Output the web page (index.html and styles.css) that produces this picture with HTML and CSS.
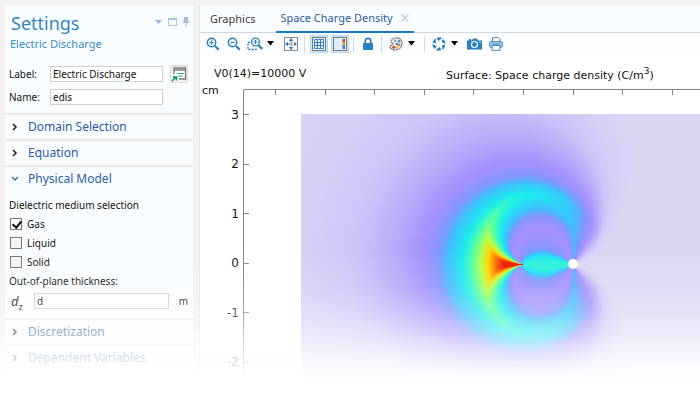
FILE: index.html
```html
<!DOCTYPE html>
<html lang="en">
<head>
<meta charset="utf-8">
<title>Electric Discharge</title>
<link rel="stylesheet" href="styles.css">
</head>
<body>
<div class="app">
  <aside class="settings">
    <header class="settings-head">
      <h1>Settings</h1>
      <div class="window-tools">
        <button aria-label="Panel menu"><svg width="8" height="8" viewBox="0 0 8 8"><path d="M0 2h7L3.500 6z" fill="#8fb6da"/></svg></button>
        <button aria-label="Maximize"><svg width="9" height="8" viewBox="0 0 9 8"><path d="M.5 .5h8v7h-8z" fill="none" stroke="#a3c4e2"/><path d="M0 1h9" stroke="#a3c4e2" stroke-width="2"/></svg></button>
        <button aria-label="Pin"><svg width="8" height="10" viewBox="0 0 8 10"><path d="M2 0h4v4l1 1v1H1V5l1-1zM3.500 6h1v4h-1z" fill="#9dbfe0"/></svg></button>
      </div>
    </header>
    <p class="subtitle">Electric Discharge</p>
    <div class="field-row">
      <label for="label">Label:</label>
      <input id="label" type="text" value="Electric Discharge">
      <button class="goto" aria-label="Go to source">
        <svg width="16" height="16" viewBox="0 0 16 16"><path d="M3 8V2h11.500v11H8" fill="#fff" stroke="#777" stroke-width="1.300"/><path d="M3 4h11" stroke="#777" stroke-width="1.500"/><path d="M6 7.500h7M7 10h5" stroke="#35b27c" stroke-width="1.200"/><path d="M1 15l4-4M2 11h3.500v3.500" fill="none" stroke="#149a5b" stroke-width="1.500"/></svg>
      </button>
    </div>
    <div class="field-row">
      <label for="name">Name:</label>
      <input id="name" type="text" value="edis">
    </div>

    <button class="section first"><svg width="6" height="8" viewBox="0 0 6 8"><path d="M1 1l3 3-3 3" fill="none" stroke="#222" stroke-width="1.500"/></svg>Domain Selection</button>
    <button class="section"><svg width="6" height="8" viewBox="0 0 6 8"><path d="M1 1l3 3-3 3" fill="none" stroke="#222" stroke-width="1.500"/></svg>Equation</button>
    <button class="section" aria-expanded="true"><svg width="8" height="6" viewBox="0 0 8 6"><path d="M1 1l3 3 3-3" fill="none" stroke="#2f66a8" stroke-width="1.300"/></svg>Physical Model</button>
    <div class="model">
      <p>Dielectric medium selection</p>
      <label class="check"><input type="checkbox" checked>Gas</label>
      <label class="check"><input type="checkbox">Liquid</label>
      <label class="check"><input type="checkbox">Solid</label>
      <p class="caption"><label for="dz">Out-of-plane thickness:</label></p>
      <div class="thickness"><span class="symbol"><i>d</i><sub>z</sub></span><input id="dz" type="text" value="d"><span class="unit">m</span></div>
    </div>
    <button class="section"><svg width="6" height="8" viewBox="0 0 6 8"><path d="M1 1l3 3-3 3" fill="none" stroke="#222" stroke-width="1.500"/></svg>Discretization</button>
    <button class="section"><svg width="6" height="8" viewBox="0 0 6 8"><path d="M1 1l3 3-3 3" fill="none" stroke="#222" stroke-width="1.500"/></svg>Dependent Variables</button>
  </aside>

  <main class="graphics">
    <nav class="tabs">
      <button class="tab">Graphics</button>
      <button class="tab active">Space Charge Density <svg width="8" height="8" viewBox="0 0 8 8"><path d="M0.500 0.500l7 7M7.500 0.500l-7 7" stroke="#bcc8d4" stroke-width="1.200"/></svg></button>
    </nav>
    <div class="toolbar">
      <div class="group">
        <button aria-label="Zoom in"><svg width="14" height="14" viewBox="0 0 14 14" fill="none" stroke="#2b80c0"><circle cx="5.500" cy="5.500" r="4.200" stroke-width="1.400"/><path d="M3.300 5.500h4.400M5.500 3.300v4.400" stroke-width="1.200"/><path d="M9 9l3.700 3.700" stroke-width="2.200"/></svg></button>
        <button aria-label="Zoom out"><svg width="14" height="14" viewBox="0 0 14 14" fill="none" stroke="#2b80c0"><circle cx="5.500" cy="5.500" r="4.200" stroke-width="1.400"/><path d="M3.300 5.500h4.400" stroke-width="1.200"/><path d="M9 9l3.700 3.700" stroke-width="2.200"/></svg></button>
        <button aria-label="Zoom box"><svg width="16" height="14" viewBox="0 0 16 14" fill="none" stroke="#2b80c0"><path d="M3 5.500H1v7h8v-2" stroke-dasharray="2 1.200" stroke-width="1.300"/><circle cx="8.500" cy="5" r="3.900" fill="#fff" stroke-width="1.400"/><path d="M6.500 5h4M8.500 3v4" stroke-width="1.200"/><path d="M11.500 8.200l3.700 3.800" stroke-width="2.200"/></svg></button>
        <button class="caret" aria-label="Zoom options"><svg width="7" height="5" viewBox="0 0 7 5"><path d="M0 0h7L3.500 4.500z"/></svg></button>
        <button class="apart" aria-label="Zoom extents"><svg width="14" height="14" viewBox="0 0 14 14"><rect x=".5" y=".5" width="13" height="13" fill="#f8fbff" stroke="#888"/><path d="M7 1l2.300 3H4.700zM7 13l2.300-3H4.700zM1 7l3-2.300v4.600zM13 7l-3-2.300v4.600z" fill="#2b80c0"/><path d="M7 4v6M4 7h6" stroke="#777" stroke-dasharray="2 1"/></svg></button>
      </div>
      <div class="group toggles">
        <button class="on" aria-label="Show grid"><svg width="14" height="14" viewBox="0 0 14 14"><rect x=".5" y=".5" width="13" height="13" fill="#e8f3fd" stroke="#777"/><path d="M2.500 2.500h9v9h-9zM5.500 2.500v9M8.500 2.500v9M2.500 5.500h9M2.500 8.500h9" fill="none" stroke="#3480c8"/></svg></button>
        <button class="on" aria-label="Show legends"><svg width="14" height="14" viewBox="0 0 14 14"><rect x=".5" y=".5" width="13" height="13" fill="#dcedfb" stroke="#777"/><path d="M9.500 2H12v3.500H9.500z" fill="#d9482b"/><path d="M9.500 5H12v3H9.500z" fill="#f0a52a"/><path d="M9.500 8H12v4H9.500z" fill="#3a7fc8"/></svg></button>
      </div>
      <div class="group">
        <button aria-label="Lock view"><svg width="12" height="14" viewBox="0 0 12 14"><path d="M3.200 7V4.200a2.800 2.800 0 0 1 5.600 0V7" fill="none" stroke="#2b80c0" stroke-width="1.700"/><rect x="1" y="6" width="10" height="7" rx=".5" fill="#2b80c0"/></svg></button>
      </div>
      <div class="group palette">
        <button aria-label="Color theme"><svg width="14" height="14" viewBox="0 0 14 14"><path d="M6.500 1c3.800-.8 6.700 1.700 6.500 5.500-.2 3.800-2.700 6.500-6.300 6.500C3 13 .8 11.200 1 9.500c.3-1.700 3-1 3-2.800C4 5.500 1.800 6 2 4.300 2.200 2.500 4.300 1.300 6.500 1z" fill="#f3f1ee" stroke="#858585" stroke-width="1.200"/><circle cx="6" cy="3.700" r="1.300" fill="#999"/><circle cx="10" cy="4.300" r="1.300" fill="#3e86c4"/><circle cx="7.800" cy="7" r="1.200" fill="#3e86c4"/><circle cx="10.200" cy="8" r="1.400" fill="#e9792f"/><circle cx="4.800" cy="10.300" r="1.500" fill="#d94630"/><circle cx="8" cy="10.500" r="1.200" fill="#edb33c"/></svg></button>
        <button class="caret" aria-label="Theme options"><svg width="7" height="5" viewBox="0 0 7 5"><path d="M0 0h7L3.500 4.500z"/></svg></button>
      </div>
      <div class="group">
        <button aria-label="Refresh plot"><svg width="14" height="14" viewBox="0 0 14 14" fill="#2b80c0"><path id="blade" d="M4.700 1Q7.500 -.3 10.300 1.100L6.200 3.900z"/><use href="#blade" transform="rotate(60 7 7)"/><use href="#blade" transform="rotate(120 7 7)"/><use href="#blade" transform="rotate(180 7 7)"/><use href="#blade" transform="rotate(240 7 7)"/><use href="#blade" transform="rotate(300 7 7)"/></svg></button>
        <button class="caret" aria-label="Refresh options"><svg width="7" height="5" viewBox="0 0 7 5"><path d="M0 0h7L3.500 4.500z"/></svg></button>
        <button class="apart" aria-label="Snapshot"><svg width="15" height="12" viewBox="0 0 15 12"><path d="M1 2.500h1V1h2v1.500h1L6 .5h4l1 2h4V11.500H0v-9z" fill="#2b80c0"/><circle cx="7.500" cy="6.500" r="3" fill="#2b80c0" stroke="#fff" stroke-width="1.200"/><circle cx="13" cy="4.300" r=".7" fill="#fff"/></svg></button>
        <button aria-label="Print"><svg width="14" height="14" viewBox="0 0 14 14"><path d="M3.500 5V.700h6l1.500 1.500V5" fill="#fff" stroke="#3f87c2"/><rect x=".7" y="4.700" width="12.600" height="5.600" rx="1.300" fill="#b9d7ee" stroke="#3f87c2"/><path d="M3 8.500h8v4.800H3z" fill="#fff" stroke="#3f87c2"/><path d="M2.500 7h9" stroke="#3f87c2"/></svg></button>
      </div>
    </div>
    <div class="plot">
      <div class="plot-head"><span>V0(14)=10000 V</span><span class="plot-title">Surface: Space charge density (C/m<sup>3</sup>)</span></div>
      <div class="plot-body">
        <div class="axis"><span class="axis-unit">cm</span>
          <div class="axis-values"><span>3</span><span>2</span><span>1</span><span>0</span><span>-1</span><span>-2</span></div>
        </div>
        <div class="surface" id="surface"><canvas id="field" role="img" aria-label="Space charge density"></canvas></div>
      </div>
    </div>
  </main>
  <div class="fade"></div>
</div>
<script src="plot.js"></script>
</body>
</html>
```
FILE: styles.css
```css
* { box-sizing: border-box; }
body { margin: 0; background: #f2f2f2; font: 12px/16px "Noto Sans", "Open Sans", sans-serif; color: #111; }
h1, p { margin: 0; font-weight: 400; }
button { font: inherit; color: inherit; background: none; border: 0; padding: 0; }
svg { display: block; flex: none; }

.app { position: relative; display: grid; grid-template-columns: 28% minmax(0, 1fr); column-gap: 3px; min-height: 100vh; padding-top: 5px; overflow: hidden; }
.settings { margin: 0 3px 0 5px; background: #fafdff; }
.settings-head { display: flex; justify-content: space-between; padding: 4px 3px 0 6px; }
.settings-head h1 { font-size: 18px; line-height: 28px; color: #3585c0; }
.window-tools { display: flex; align-items: center; gap: 5px; height: 26px; }
.subtitle { padding-left: 5px; font-size: 11px; line-height: 14px; color: #3b8bc6; }
.field-row { display: grid; grid-template-columns: 41px 113px 20px; align-items: center; padding-left: 4px; height: 23px; font-size: 10px; }
.subtitle + .field-row { margin-top: 11px; }
input[type="text"] { min-width: 0; width: 100%; height: 16px; margin: 0; padding: 0 2px; border: 1px solid #cfcfcf; background: #fff; font: 10px/14px "Noto Sans", sans-serif; color: #111; }
.goto { display: grid; place-items: center; width: 18px; height: 18px; margin-left: 7px; background: #f0f0f0; border: 1px solid #ddd; border-radius: 2px; }

.section { display: flex; align-items: center; width: 100%; height: 26px; padding-left: 6px; border-top: 2px solid #e7e9eb; font-size: 12px; color: #2d5ba3; text-align: left; }
.section svg { width: 8px; margin-right: 9px; }
.section.first { margin-top: 5px; }
.model { padding: 5px 4px 7px; font-size: 10px; }
.model p { height: 18px; line-height: 18px; }
.model .caption { height: 20px; line-height: 20px; }
.check { display: flex; align-items: center; gap: 5px; height: 19px; }
.check input { appearance: none; width: 12px; height: 12px; margin: 0 0 0 1px; border: 1px solid #777; background: #f3f3f3; }
.check input:checked { background: #fff; }
.check input:checked::before { content: ""; display: block; width: 4px; height: 7px; margin: 0 0 0 3px; border: solid #111; border-width: 0 2px 2px 0; transform: rotate(40deg); }
.thickness { display: grid; grid-template-columns: 25px 1fr 20px; align-items: center; height: 20px; }
.symbol { padding-left: 2px; font-size: 13px; line-height: 16px; }
.symbol sub { font-size: 9px; line-height: 0; }
.unit { text-align: right; padding-right: 1px; }

.graphics { display: flex; flex-direction: column; background: #fff; border-left: 1px solid #e6e6e6; }
.tabs { display: flex; height: 28px; background: #fafdff; border-bottom: 1px solid #d4d8dc; }
.tab { padding: 0 10px; height: 28px; font-size: 11px; color: #3c3c3c; }
.tab.active { display: flex; align-items: center; gap: 8px; padding: 0 5px 0 4px; margin-left: 11px; color: #2d5ba3; border-bottom: 2px solid #1878be; }
.toolbar { display: flex; height: 21px; align-items: center; background: #fbfdff; }
.group { display: flex; align-items: center; height: 16px; padding: 0 3px; border-left: 1px solid #d6d9dc; }
.group:first-child { border: 0; padding-left: 2px; }
.group button { display: grid; place-items: center; width: 21px; height: 18px; }
.group .caret { width: 11px; }
.group .apart { margin-left: 4px; }
.toggles { gap: 3px; padding: 0 4px 0 5px; }
.group .on { width: 18px; background: #cfe6f9; box-shadow: inset 0 0 0 1px #b5d7f1; }
.palette { padding-right: 7px; }

.plot { flex: 1; font: 11px/14px "DejaVu Sans", sans-serif; }
.plot-head { display: grid; grid-template-columns: 232px 1fr; height: 30px; padding: 13px 0 0 14px; white-space: nowrap; }
.plot-title { padding-top: 2px; }
.plot-title sup { font-size: 9px; line-height: 0; vertical-align: 5px; }
.plot-body { display: grid; grid-template-columns: 43px minmax(0, 1fr); }
.axis { text-align: right; padding-right: 4px; font-size: 12px; }
.axis-unit { display: block; text-align: left; padding-left: 2px; font-size: 11px; line-height: 14px; }
.axis-values { display: flex; flex-direction: column; justify-content: space-between; height: 261px; margin-top: 10px; }
.surface { overflow: hidden; padding-top: 5px; }
canvas { display: block; }

.fade { position: absolute; inset: 0; pointer-events: none; background: linear-gradient(rgba(255,255,255,0) 62%, rgba(255,255,255,.13) 72%, rgba(255,255,255,.3) 78%, rgba(255,255,255,.5) 83%, rgba(255,255,255,.78) 89%, #fff 95%); }
```
FILE: plot.js
```js
const host = document.getElementById("surface");
const canvas = document.getElementById("field");
const HEIGHT = 300;
const ORIGIN_Y = 175;
const DOMAIN_LEFT = 58;
const DOMAIN_TOP = 25;
const TIP = 279;
const BALL = 330;

// Density level -> colour
const colours = [
  [0, 220, 214, 244], [.15, 206, 198, 249], [.25, 184, 168, 249], [.33, 163, 146, 254],
  [.42, 130, 150, 255], [.5, 64, 190, 255], [.6, 28, 236, 236], [.68, 80, 255, 168],
  [.76, 176, 255, 80], [.84, 255, 216, 0], [.92, 255, 120, 0], [1, 238, 24, 0]
];
// Distance from the ball electrode -> level
const falloff = [[0, 1.08], [60, 1.06], [70, 1], [76, .95], [83, .87], [90, .79], [96, .73], [106, .64], [113, .58],
  [123, .52], [133, .44], [146, .35], [173, .26], [206, .18], [240, .12], [272, .06], [400, 0]];
// Angle subtended by the electrode gap -> upper limit of the level
const limit = [[0, 1.1], [10, .99], [22, .83], [32, .7], [40, .6], [48, .51], [54, .43], [60, .37], [66, .34],
  [74, .33], [84, .345], [100, .38], [115, .41], [125, .46], [136, .55], [160, .62], [180, .62]];
// Cosine of the direction seen from the ball, away from the gap -> upper limit
const side = [[-1, .03], [-.92, .05], [-.8, .13], [-.6, .25], [-.4, .35], [-.2, .44], [0, .5], [.3, .57],
  [.5, .62], [.7, .68], [.85, .82], [.95, 1.1], [1, 1.2]];

function lookup(table, x, column = 1) {
  if (x <= table[0][0]) return table[0][column];
  for (let i = 1; i < table.length; i++) {
    if (x <= table[i][0]) {
      const a = table[i - 1], b = table[i];
      return a[column] + (b[column] - a[column]) * (x - a[0]) / (b[0] - a[0]);
    }
  }
  return table[table.length - 1][column];
}

function softMin(p, q, k) {
  const h = Math.max(k - Math.abs(p - q), 0) / k;
  return Math.min(p, q) - h * h * k / 4;
}

function level(x, y) {
  const dx = x - BALL, dy = y - ORIGIN_Y;
  const r = Math.hypot(dx, dy) + .01;
  const c = -dx / r;
  let d = 2 * r / (1 + c + 1e-6);
  if (d > 133) d = 133 + (d - 133) * (1 - .35 * (1 - c * c));
  const bent = x + 8 * (1 - Math.exp(-Math.abs(dy) / 8));
  const ax = TIP - bent, bx = BALL - bent;
  const angle = Math.abs(Math.atan2(ax * dy - bx * dy, ax * bx + dy * dy)) * 180 / Math.PI;
  const p = softMin(lookup(falloff, d), lookup(side, c), .08);
  return softMin(p, lookup(limit, angle), .06);
}

function draw() {
  const width = host.clientWidth;
  canvas.width = width;
  canvas.height = HEIGHT;
  const g = canvas.getContext("2d");
  const w = Math.max(1, width - DOMAIN_LEFT), h = HEIGHT - DOMAIN_TOP;
  const image = g.createImageData(w, h);
  for (let j = 0; j < h; j++) {
    for (let i = 0; i < w; i++) {
      const v = level(i + DOMAIN_LEFT, j + DOMAIN_TOP);
      const o = (j * w + i) * 4;
      for (let n = 0; n < 3; n++) image.data[o + n] = lookup(colours, v, n + 1);
      image.data[o + 3] = 255;
    }
  }
  g.putImageData(image, DOMAIN_LEFT, DOMAIN_TOP);
  g.fillStyle = "#fff";
  g.beginPath();
  g.arc(BALL, ORIGIN_Y, 5, 0, 7);
  g.fill();
  g.strokeStyle = "#858585";
  g.beginPath();
  g.moveTo(width, .5);
  g.lineTo(.5, .5);
  g.lineTo(.5, HEIGHT);
  for (let x = 32; x < width; x += 49.6) {
    g.moveTo(Math.round(x) + .5, 0);
    g.lineTo(Math.round(x) + .5, 6);
  }
  for (let y = 25; y < HEIGHT; y += 49.5) {
    g.moveTo(0, Math.round(y) + .5);
    g.lineTo(6, Math.round(y) + .5);
  }
  g.stroke();
}

draw();
window.addEventListener("resize", draw);
```
